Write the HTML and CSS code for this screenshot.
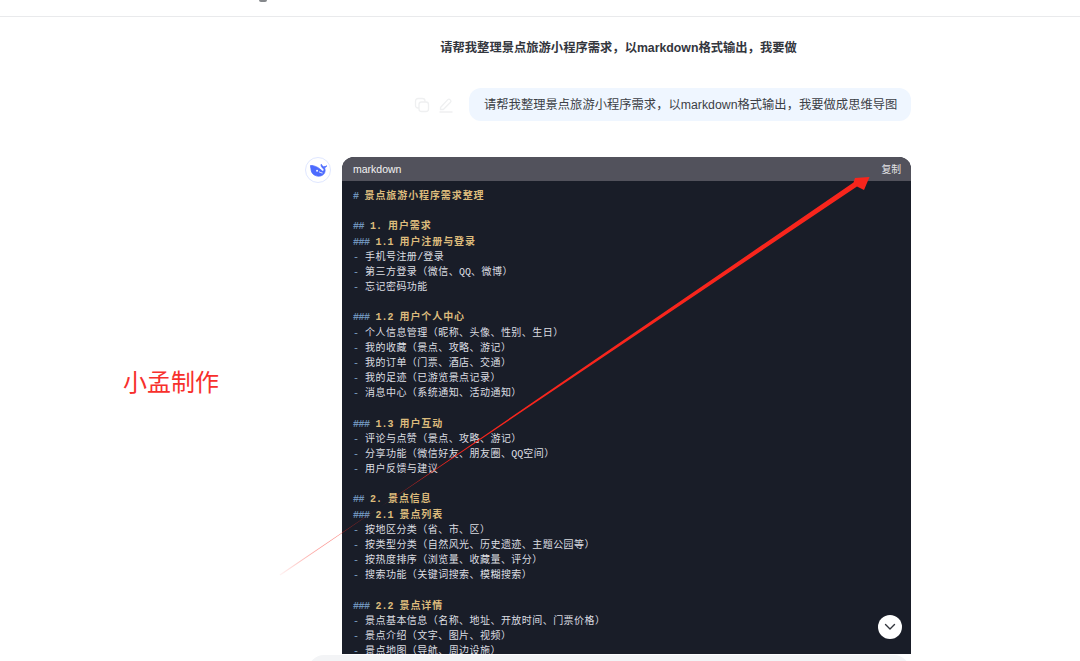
FILE: index.html
```html
<!DOCTYPE html>
<html lang="zh-CN">
<head>
<meta charset="utf-8">
<title>景点旅游小程序需求</title>
<link rel="stylesheet" href="styles.css">
</head>
<body>
<div class="page">
  <header class="topbar"><span class="topbar-tail"></span></header>
  <main class="chat">
    <h1 class="title">请帮我整理景点旅游小程序需求，以markdown格式输出，我要做</h1>
    <div class="user-row">
      <svg class="act" viewBox="0 0 16 16" width="16" height="16"><rect x="1.5" y="1.5" width="9.5" height="9.5" rx="2.5"/><rect x="5" y="5" width="9.5" height="9.5" rx="2.5" class="act-front"/></svg>
      <svg class="act" viewBox="0 0 16 16" width="16" height="16"><path d="M2.5 10.5 9.8 2.6a1.5 1.5 0 0 1 2.2 0l.5.5a1.5 1.5 0 0 1 0 2.1L5.3 12.5H2.5zM1.5 15h13"/></svg>
      <div class="bubble">请帮我整理景点旅游小程序需求，以markdown格式输出，我要做成思维导图</div>
    </div>
    <div class="answer-row">
      <div class="avatar">
        <svg class="whale" viewBox="0 0 20 16" width="17" height="13" preserveAspectRatio="none"><path fill="#4d6bfe" stroke="#4d6bfe" stroke-width=".9" d="M19.6 2.2c-.3-.2-.5.2-.8.4l-.5.4c-.8-.4-1.500.1-2 .8-.2-.9-1.400-1.200-2-1.700-.4-.3-.5-.6-.6-1C13.500.3 13.200.1 13 .6c-.3.700.1 2 .6 2.800.5.800 1.100 1.500 1.800 2.200.5.600 1.300 1.500 1 2.200-.3.800-1.400 1.300-2 .8-1.800-1.500-3.600-3.700-6.500-5C5.700 2.500 2.600 1.600.7 1.900.200 2 0 2.300.3 2.800c1.500 2.800 0 6.300 3.300 9.600 2 2 5.500 3.100 8.400 2.500 3.500-.7 5.900-3.700 5.800-7.200 0-1.300-.5-2.100-.7-3 .600-.300 1.500-.700 2.200-1.600.2-.300.500-.600.300-.900z"/><circle cx="8.300" cy="8.300" r="1.100" fill="#fff"/><path d="M10.500 9.500c1.500.8 3.100 1.600 4.300 1.600" stroke="#fff" stroke-width="1" fill="none"/></svg>
      </div>
      <section class="code-card">
        <div class="code-head"><span>markdown</span><span class="copy">复制</span></div>
        <div class="code-body">
          <div class="ln hd"><i>#</i><b class="c"> </b><span class="cj">景点旅游小程序需求整理</span></div>
          <div class="ln"></div>
          <div class="ln hd"><i>##</i><b class="c"> 1. </b><span class="cj">用户需求</span></div>
          <div class="ln hd"><i>###</i><b class="c"> 1.1 </b><span class="cj">用户注册与登录</span></div>
          <div class="ln"><i>-</i><b class="c"> </b><span class="cj">手机号注册</span><b class="c">/</b><span class="cj">登录</span></div>
          <div class="ln"><i>-</i><b class="c"> </b><span class="cj">第三方登录（微信、</span><b class="c">QQ</b><span class="cj">、微博）</span></div>
          <div class="ln"><i>-</i><b class="c"> </b><span class="cj">忘记密码功能</span></div>
          <div class="ln"></div>
          <div class="ln hd"><i>###</i><b class="c"> 1.2 </b><span class="cj">用户个人中心</span></div>
          <div class="ln"><i>-</i><b class="c"> </b><span class="cj">个人信息管理（昵称、头像、性别、生日）</span></div>
          <div class="ln"><i>-</i><b class="c"> </b><span class="cj">我的收藏（景点、攻略、游记）</span></div>
          <div class="ln"><i>-</i><b class="c"> </b><span class="cj">我的订单（门票、酒店、交通）</span></div>
          <div class="ln"><i>-</i><b class="c"> </b><span class="cj">我的足迹（已游览景点记录）</span></div>
          <div class="ln"><i>-</i><b class="c"> </b><span class="cj">消息中心（系统通知、活动通知）</span></div>
          <div class="ln"></div>
          <div class="ln hd"><i>###</i><b class="c"> 1.3 </b><span class="cj">用户互动</span></div>
          <div class="ln"><i>-</i><b class="c"> </b><span class="cj">评论与点赞（景点、攻略、游记）</span></div>
          <div class="ln"><i>-</i><b class="c"> </b><span class="cj">分享功能（微信好友、朋友圈、</span><b class="c">QQ</b><span class="cj">空间）</span></div>
          <div class="ln"><i>-</i><b class="c"> </b><span class="cj">用户反馈与建议</span></div>
          <div class="ln"></div>
          <div class="ln hd"><i>##</i><b class="c"> 2. </b><span class="cj">景点信息</span></div>
          <div class="ln hd"><i>###</i><b class="c"> 2.1 </b><span class="cj">景点列表</span></div>
          <div class="ln"><i>-</i><b class="c"> </b><span class="cj">按地区分类（省、市、区）</span></div>
          <div class="ln"><i>-</i><b class="c"> </b><span class="cj">按类型分类（自然风光、历史遗迹、主题公园等）</span></div>
          <div class="ln"><i>-</i><b class="c"> </b><span class="cj">按热度排序（浏览量、收藏量、评分）</span></div>
          <div class="ln"><i>-</i><b class="c"> </b><span class="cj">搜索功能（关键词搜索、模糊搜索）</span></div>
          <div class="ln"></div>
          <div class="ln hd"><i>###</i><b class="c"> 2.2 </b><span class="cj">景点详情</span></div>
          <div class="ln"><i>-</i><b class="c"> </b><span class="cj">景点基本信息（名称、地址、开放时间、门票价格）</span></div>
          <div class="ln"><i>-</i><b class="c"> </b><span class="cj">景点介绍（文字、图片、视频）</span></div>
          <div class="ln"><i>-</i><b class="c"> </b><span class="cj">景点地图（导航、周边设施）</span></div>
        </div>
      </section>
    </div>
  </main>
  <div class="composer"></div>
  <button class="scroll-down" type="button" aria-label="向下滚动">
    <svg viewBox="0 0 12 8" width="12" height="8"><path d="M1.500 1.500 6 6l4.500-4.500" fill="none" stroke="#33363d" stroke-width="1.400" stroke-linecap="round" stroke-linejoin="round"/></svg>
  </button>
  <div class="note">小孟制作</div>
  <svg class="arrow" viewBox="0 0 1080 661" width="1080" height="661">
    <defs>
      <linearGradient id="fade" gradientUnits="userSpaceOnUse" x1="280" y1="575" x2="440" y2="467">
        <stop offset="0" stop-color="#f8251c" stop-opacity=".05"/>
        <stop offset=".25" stop-color="#f8251c" stop-opacity=".45"/>
        <stop offset=".6" stop-color="#f8251c" stop-opacity=".8"/>
        <stop offset="1" stop-color="#f8251c"/>
      </linearGradient>
    </defs>
    <path fill="url(#fade)" d="M279.600 574.600 857 186.500 864 190 869.500 177 855 178 853.500 182.500 280.400 575.400z"/>
  </svg>
</div>
</body>
</html>
```
FILE: styles.css
```css
* { box-sizing: border-box; }
html, body { margin: 0; padding: 0; background: #fff; }
body { font-family: "Liberation Sans", "Noto Sans CJK SC", sans-serif; color: #33363d; }
.page { position: relative; width: 1080px; height: 661px; overflow: hidden; }
.topbar { height: 17px; border-bottom: 1px solid #e9eaec; position: relative; }
.topbar-tail { position: absolute; left: 259px; top: 0; width: 8px; height: 2px; background: #85888c; border-radius: 0 0 4px 4px; }
.chat { display: flex; flex-direction: column; padding-left: 305px; width: 911px; }
.title { margin: 22px 0 0; padding-left: 21px; height: 18px; font-size: 12.300px; line-height: 18px; font-weight: 700; text-align: center; color: #33363d; white-space: nowrap; }
.user-row { display: flex; align-items: center; justify-content: flex-end; margin-top: 31px; gap: 8px; }
.act { fill: none; stroke: #eff0f1; stroke-width: 1.300; }
.act-front { fill: #fff; }
.bubble { margin-left: 7px; width: 442px; height: 33px; background: #eff6ff; border-radius: 12px; font-size: 12.300px; line-height: 34px; padding-left: 15px; color: #3c3f46; white-space: nowrap; }
.answer-row { display: flex; align-items: flex-start; margin-top: 36px; gap: 11px; }
.avatar { width: 26px; height: 26px; flex: none; border: 1px solid #dfe7ff; border-radius: 50%; display: flex; align-items: center; justify-content: center; }
.code-card { width: 569px; height: 497px; overflow: hidden; border-radius: 12px 12px 0 0; background: #191d28; }
.code-head { height: 24px; background: #52525c; color: #f2f2f4; display: flex; align-items: center; justify-content: space-between; padding: 0 10px 0 11px; font-size: 10.500px; }
.copy { font-size: 9.800px; color: #e2e2e6; }
.code-body { padding: 6px 11px 0; }
.ln { height: 15.180px; line-height: 15.180px; white-space: pre; color: #dcdee2; font-family: "Liberation Mono", "Noto Sans CJK SC", monospace; font-size: 10px; }
.ln i { font-style: normal; color: #7c9cc0; }
.ln .c { font-weight: 400; }
.cj { font-family: "Noto Sans CJK SC", sans-serif; font-size: 10px; letter-spacing: .450px; }
.hd { color: #dcbb7c; font-weight: 700; }
.hd .c { font-weight: 700; }
.hd i { color: #6f93bb; letter-spacing: -.500px; }
.hd .cj { letter-spacing: .900px; }
.composer { position: absolute; left: 308px; top: 655px; width: 602px; height: 40px; background: #f3f4f6; border-radius: 16px; }
.scroll-down { position: absolute; left: 878px; top: 615px; width: 24px; height: 24px; padding: 0; border: 0; border-radius: 50%; background: #fff; display: flex; align-items: center; justify-content: center; }
.note { position: absolute; left: 123px; top: 366px; font-size: 24px; line-height: 30px; color: #f7302c; font-family: "Noto Sans CJK SC", sans-serif; white-space: nowrap; }
.arrow { position: absolute; left: 0; top: 0; pointer-events: none; }
```
